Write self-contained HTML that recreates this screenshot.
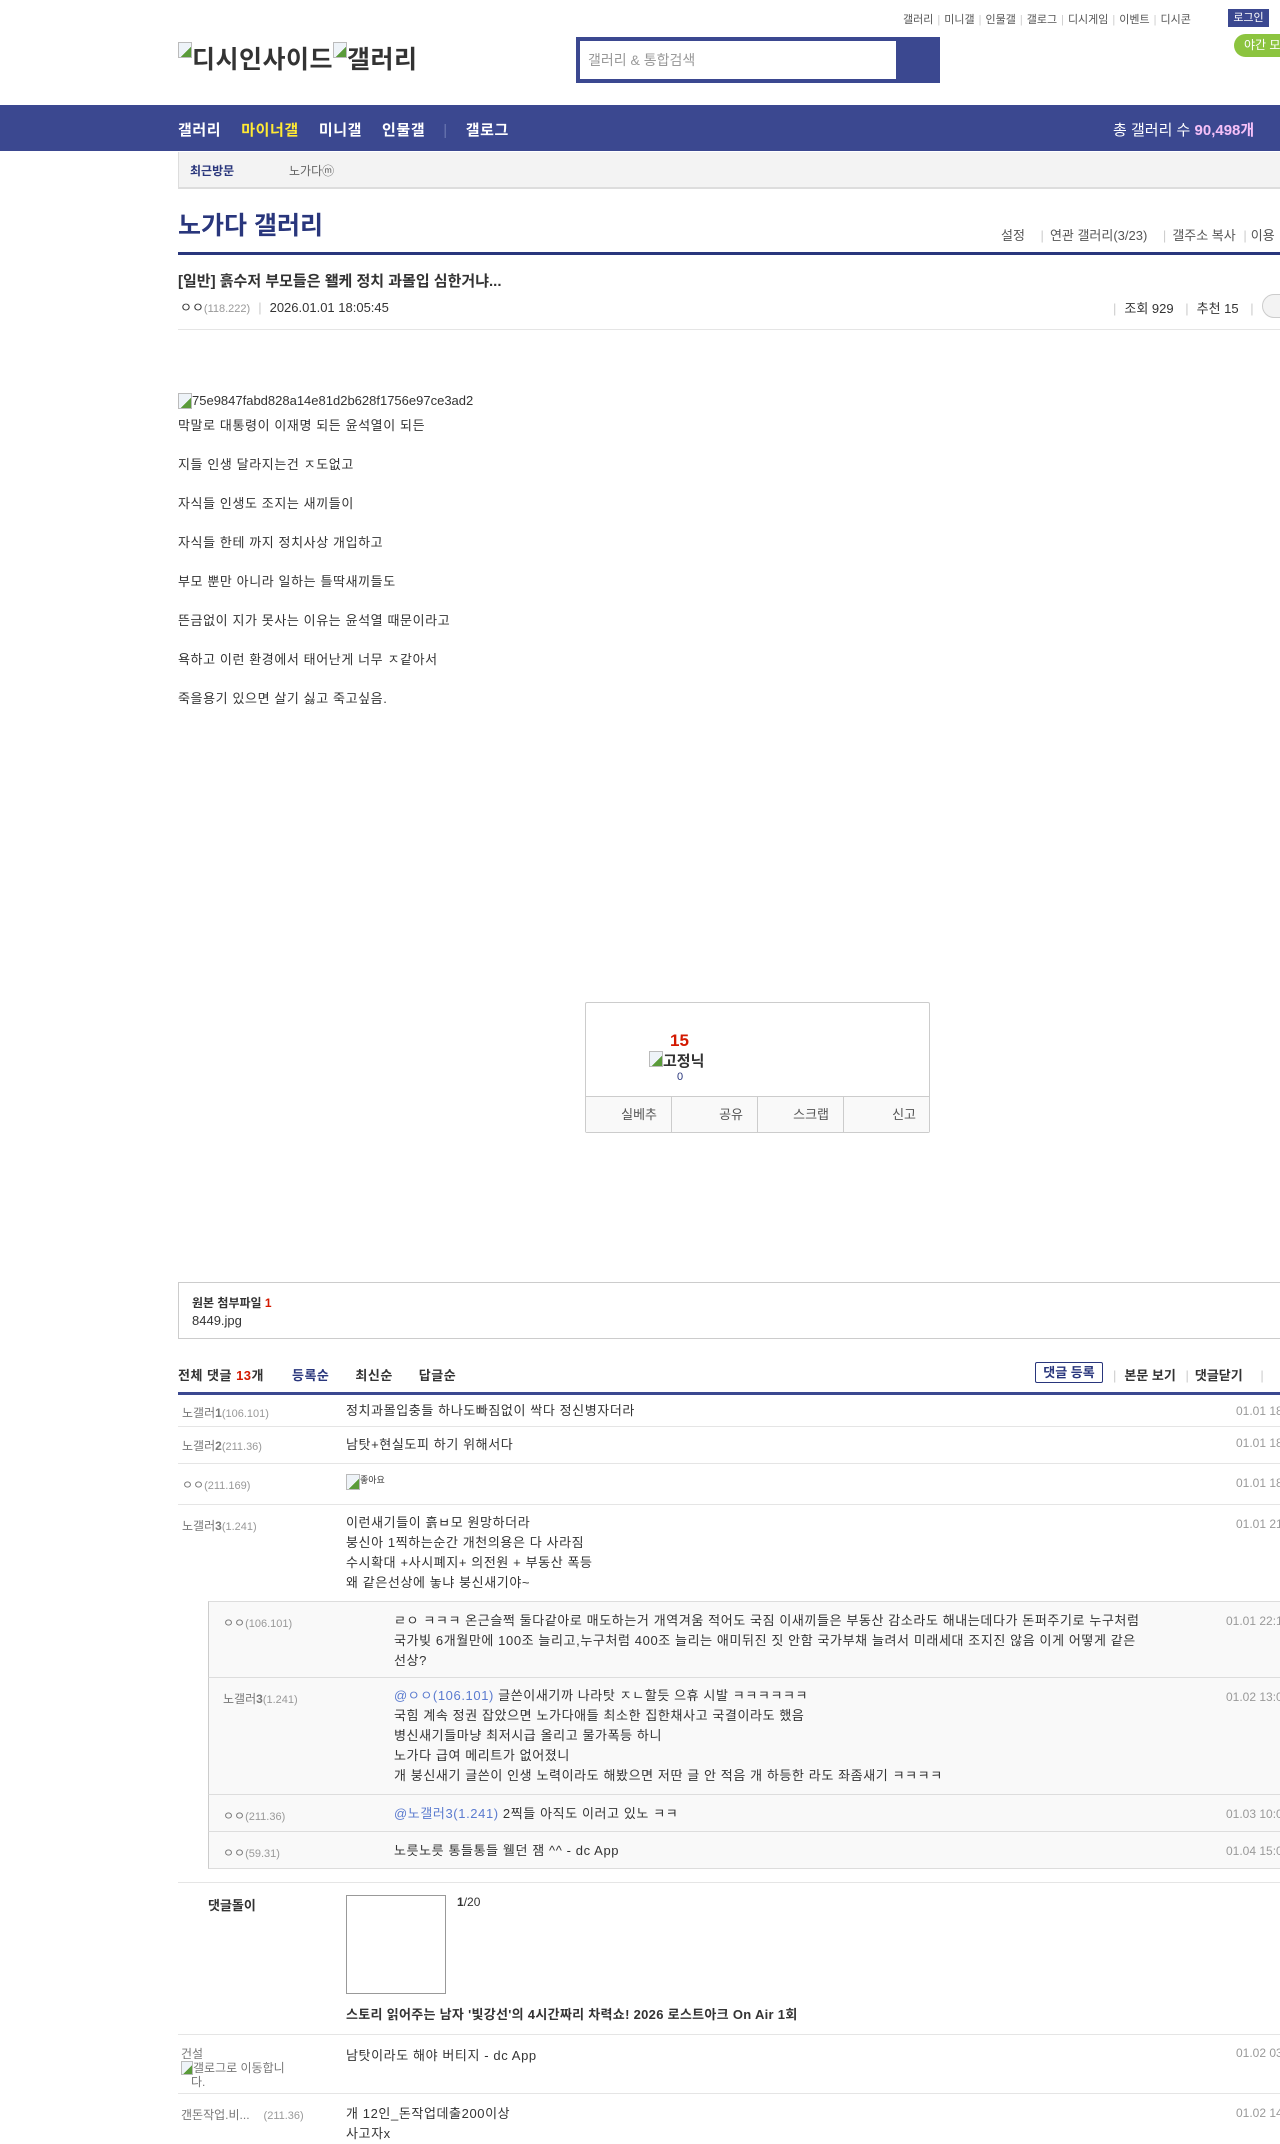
<!DOCTYPE html>
<html><head><meta charset="utf-8"><style>
*{margin:0;padding:0;box-sizing:border-box}
body{width:1280px;height:2142px;overflow:hidden;position:relative;background:#fff;font-family:"Liberation Sans","Noto Sans CJK KR",sans-serif;font-size:13px;color:#333}
.a{position:absolute;white-space:nowrap}
.tl{font-size:11px;color:#555}
.tl span{color:#ccc;margin:0 4px}
.g{color:#999;font-size:11px;letter-spacing:0}
.row{position:absolute;left:178px;width:1160px;border-bottom:1px solid #e5e5e5}
.nm{position:absolute;left:4px;color:#777;font-size:12px}
.ct{position:absolute;left:168px;font-size:13px;line-height:20px;color:#333;letter-spacing:0.6px}
.dt{position:absolute;left:1058px;color:#999;font-size:12px}
.rp{position:absolute;left:208px;width:1130px;background:#f9f9f9;border-left:1px solid #ccc;border-bottom:1px solid #ddd}
.rp .nm{left:14px}.rp .ct{left:185px;width:770px;white-space:normal}.rp .dt{left:1017px}
.at{color:#5b7bcf}
.bt{position:absolute;top:1096px;height:37px;width:86px;border-right:1px solid #ccc;text-align:right;padding-right:14px;line-height:37px;color:#555;font-size:13px}
.ic{display:inline-block;width:14px;height:16px;border:1px solid #bbb;background:linear-gradient(135deg,#eef3f8 60%,#5a9b3a 60%);vertical-align:top;margin-top:2px}
</style></head><body>
<div class="a tl" style="left:903px;top:11px">갤러리<span>|</span>미니갤<span>|</span>인물갤<span>|</span>갤로그<span>|</span>디시게임<span>|</span>이벤트<span>|</span>디시콘</div>
<div class="a" style="left:1228px;top:9px;width:41px;height:18px;background:#3b4890;color:#fff;font-size:11px;text-align:center;line-height:18px">로그인</div>
<div class="a" style="left:1234px;top:34px;width:60px;height:23px;background:#8cc43f;border-radius:12px;color:#fff;font-size:12px;line-height:23px;padding-left:10px">야간 모</div>
<div class="a" style="left:178px;top:40px;font-size:25px;font-weight:bold;color:#333;letter-spacing:0.5px"><span class="ic"></span>디시인사이드<span class="ic"></span>갤러리</div>
<div class="a" style="left:576px;top:37px;width:364px;height:46px;background:#3b4890"></div>
<div class="a" style="left:580px;top:41px;width:316px;height:38px;background:#fff;color:#999;font-size:14px;line-height:38px;padding-left:8px">갤러리 &amp; 통합검색</div>
<div class="a" style="left:0;top:105px;width:1280px;height:46px;background:#3b4890"></div>
<div class="a" style="left:178px;top:119px;font-size:15px;font-weight:bold;color:#fff;letter-spacing:0.6px">갤러리<span style="color:#ffea33;margin-left:20px">마이너갤</span><span style="margin-left:20px">미니갤</span><span style="margin-left:20px">인물갤</span><span style="color:#6a76b0;margin:0 18px;font-weight:normal">|</span>갤로그</div>
<div class="a" style="left:1113px;top:119px;font-size:15px;color:#fff">총 갤러리 수 <b style="color:#f5c0f8">90,498개</b></div>
<div class="a" style="left:178px;top:152px;width:1102px;height:37px;background:#f3f3f3;border-bottom:2px solid #ddd;border-left:1px solid #ddd"></div>
<div class="a" style="left:190px;top:162px;font-size:12px;font-weight:bold;color:#29367c">최근방문</div>
<div class="a" style="left:289px;top:162px;font-size:12px;color:#666">노가다ⓜ</div>
<div class="a" style="left:178px;top:206px;font-size:25px;font-weight:bold;color:#29367c">노가다 갤러리</div>
<div class="a" style="left:1001px;top:225px;font-size:13px;color:#555">설정 <span style="color:#ccc;margin:0 6px 0 12px">|</span>연관 갤러리(3/23) <span style="color:#ccc;margin:0 6px 0 12px">|</span>갤주소 복사 <span style="color:#ccc;margin:0 4px">|</span>이용</div>
<div class="a" style="left:178px;top:252px;width:1102px;height:3px;background:#29367c"></div>
<div class="a" style="left:178px;top:270px;font-size:15px;font-weight:bold;color:#333">[일반] 흙수저 부모들은 왤케 정치 과몰입 심한거냐...</div>
<div class="a" style="left:180px;top:297px;font-size:13px;color:#333">ㅇㅇ<span class="g">(118.222)</span><span style="color:#ccc;margin:0 8px">|</span>2026.01.01 18:05:45</div>
<div class="a" style="left:1113px;top:298px;font-size:13px;color:#333"><span style="color:#ccc;margin-right:8px">|</span>조회 929 <span style="color:#ccc;margin:0 8px">|</span>추천 15 <span style="color:#ccc;margin:0 8px">|</span></div>
<div class="a" style="left:1262px;top:294px;width:30px;height:24px;border:1px solid #ccc;border-radius:12px;background:#f3f3f3"></div>
<div class="a" style="left:178px;top:329px;width:1102px;height:1px;background:#e5e5e5"></div>
<div class="a" style="left:178px;top:393px;font-size:13px;color:#333"><span class="ic" style="margin-top:0"></span>75e9847fabd828a14e81d2b628f1756e97ce3ad2</div>
<div class="a" style="left:178px;top:406px;font-size:13px;line-height:39px;color:#333;letter-spacing:0.6px">막말로 대통령이 이재명 되든 윤석열이 되든<br>지들 인생 달라지는건 ㅈ도없고<br>자식들 인생도 조지는 새끼들이<br>자식들 한테 까지 정치사상 개입하고<br>부모 뿐만 아니라 일하는 틀딱새끼들도<br>뜬금없이 지가 못사는 이유는 윤석열 때문이라고<br>욕하고 이런 환경에서 태어난게 너무 ㅈ같아서<br>죽을용기 있으면 살기 싫고 죽고싶음.</div>
<div class="a" style="left:585px;top:1002px;width:345px;height:131px;border:1px solid #ccc;border-radius:2px"></div>
<div class="a" style="left:586px;top:1096px;width:343px;height:36px;background:#f9f9f9;border-top:1px solid #ccc"></div>
<div class="a" style="left:670px;top:1031px;font-size:17px;font-weight:bold;color:#d31900">15</div>
<div class="a" style="left:649px;top:1050px;font-size:15px;font-weight:bold;color:#333"><span class="ic" style="margin-top:1px"></span>고정닉</div>
<div class="a" style="left:677px;top:1071px;font-size:11px;color:#29367c">0</div>
<div class="bt" style="left:586px">실베추</div>
<div class="bt" style="left:672px">공유</div>
<div class="bt" style="left:758px">스크랩</div>
<div class="bt" style="left:844px;border:none">신고</div>
<div class="a" style="left:178px;top:1282px;width:1102px;height:57px;border:1px solid #ccc;border-right:none"></div>
<div class="a" style="left:192px;top:1294px;font-size:12px;font-weight:bold;color:#333">원본 첨부파일 <span style="color:#d31900">1</span></div>
<div class="a" style="left:192px;top:1313px;font-size:13px;color:#333">8449.jpg</div>
<div class="a" style="left:178px;top:1365px;font-size:13px;font-weight:bold;color:#333;letter-spacing:0.5px">전체 댓글 <span style="color:#d31900">13</span>개<span style="color:#29367c;margin-left:28px">등록순</span><span style="margin-left:26px">최신순</span><span style="margin-left:26px">답글순</span></div>
<div class="a" style="left:1035px;top:1362px;width:68px;height:21px;border:1px solid #29367c;border-radius:2px;color:#29367c;font-size:13px;font-weight:bold;text-align:center;line-height:19px">댓글 등록</div>
<div class="a" style="left:1113px;top:1365px;font-size:13px;font-weight:bold;color:#333"><span style="color:#ccc;font-weight:normal;margin-right:8px">|</span>본문 보기 <span style="color:#ccc;font-weight:normal;margin:0 6px">|</span>댓글닫기 <span style="color:#ccc;font-weight:normal;margin-left:14px">|</span></div>
<div class="a" style="left:178px;top:1392px;width:1102px;height:3px;background:#3b4890"></div>
<div class="row" style="top:1395px;height:32px"><span class="nm" style="top:9px">노갤러<b>1</b><span class="g">(106.101)</span></span><span class="ct" style="top:6px">정치과몰입충들 하나도빠짐없이 싹다 정신병자더라</span><span class="dt" style="top:9px">01.01 18:1</span></div>
<div class="row" style="top:1427px;height:37px"><span class="nm" style="top:10px">노갤러<b>2</b><span class="g">(211.36)</span></span><span class="ct" style="top:8px">남탓+현실도피 하기 위해서다</span><span class="dt" style="top:9px">01.01 18:</span></div>
<div class="row" style="top:1464px;height:41px"><span class="nm" style="top:12px">ㅇㅇ<span class="g">(211.169)</span></span><span class="ct" style="top:6px;font-size:9px;letter-spacing:0"><span class="ic" style="margin-top:4px"></span>좋아요</span><span class="dt" style="top:12px">01.01 18:</span></div>
<div class="row" style="top:1505px;height:96px;border:none"><span class="nm" style="top:12px">노갤러<b>3</b><span class="g">(1.241)</span></span><span class="ct" style="top:8px">이런새기들이 흙ㅂ모 원망하더라<br>붕신아 1찍하는순간 개천의용은 다 사라짐<br>수시확대 +사시폐지+ 의전원 + 부동산 폭등<br>왜 같은선상에 놓냐 붕신새기야~</span><span class="dt" style="top:12px">01.01 21:</span></div>
<div class="rp" style="top:1601px;height:77px;border-top:1px solid #ddd"><span class="nm" style="top:12px">ㅇㅇ<span class="g">(106.101)</span></span><span class="ct" style="top:9px;width:752px">ㄹㅇ ㅋㅋㅋ 온근슬쩍 둘다같아로 매도하는거 개역겨움 적어도 국짐 이새끼들은 부동산 감소라도 해내는데다가 돈퍼주기로 누구처럼 국가빚 6개월만에 100조 늘리고,누구처럼 400조 늘리는 애미뒤진 짓 안함 국가부채 늘려서 미래세대 조지진 않음 이게 어떻게 같은 선상?</span><span class="dt" style="top:12px">01.01 22:1</span></div>
<div class="rp" style="top:1678px;height:117px"><span class="nm" style="top:12px">노갤러<b>3</b><span class="g">(1.241)</span></span><span class="ct" style="top:8px"><span class="at">@ㅇㅇ(106.101)</span> 글쓴이새기까 나라탓 ㅈㄴ할듯 으휴 시발 ㅋㅋㅋㅋㅋㅋ<br>국힘 계속 정권 잡았으면 노가다애들 최소한 집한채사고 국결이라도 했음<br>병신새기들마냥 최저시급 올리고 물가폭등 하니<br>노가다 급여 메리트가 없어졌니<br>개 붕신새기 글쓴이 인생 노력이라도 해봤으면 저딴 글 안 적음 개 하등한 라도 좌좀새기 ㅋㅋㅋㅋ</span><span class="dt" style="top:12px">01.02 13:0</span></div>
<div class="rp" style="top:1795px;height:37px"><span class="nm" style="top:12px">ㅇㅇ<span class="g">(211.36)</span></span><span class="ct" style="top:9px"><span class="at">@노갤러3(1.241)</span> 2찍들 아직도 이러고 있노 ㅋㅋ</span><span class="dt" style="top:12px">01.03 10:0</span></div>
<div class="rp" style="top:1832px;height:37px"><span class="nm" style="top:12px">ㅇㅇ<span class="g">(59.31)</span></span><span class="ct" style="top:9px">노릇노릇 통들통들 웰던 잼 ^^ - dc App</span><span class="dt" style="top:12px">01.04 15:0</span></div>
<div class="row" style="top:1869px;height:14px"></div>
<div class="a" style="left:208px;top:1895px;font-size:13px;font-weight:bold;color:#333">댓글돌이</div>
<div class="a" style="left:346px;top:1895px;width:100px;height:99px;border:1px solid #999"></div>
<div class="a" style="left:457px;top:1895px;font-size:12px;color:#333"><b>1</b>/20</div>
<div class="a" style="left:346px;top:2004px;font-size:13px;font-weight:bold;color:#333;letter-spacing:0.3px">스토리 읽어주는 남자 '빛강선'의 4시간짜리 차력쇼! 2026 로스트아크 On Air 1회</div>
<div class="row" style="top:2034px;height:1px"></div>
<div class="a" style="left:181px;top:2047px;font-size:12px;color:#777;line-height:14px;white-space:normal;width:130px">건설<br><span class="ic" style="margin-top:0;width:12px;height:14px"></span>갤로그로 이동합니<br>&nbsp;&nbsp;&nbsp;다.</div>
<div class="a" style="left:346px;top:2045px;font-size:13px;letter-spacing:0.6px">남탓이라도 해야 버티지 - dc App</div>
<div class="a" style="left:1236px;top:2046px;font-size:12px;color:#999">01.02 03</div>
<div class="row" style="top:2093px;height:1px"></div>
<div class="a" style="left:181px;top:2106px;font-size:12px;color:#777">갠돈작업.비...<span class="g" style="margin-left:14px">(211.36)</span></div>
<div class="a" style="left:346px;top:2104px;font-size:13px;line-height:20px;letter-spacing:0.6px">개 12인_돈작업데출200이상<br>사고자x</div>
<div class="a" style="left:1236px;top:2106px;font-size:12px;color:#999">01.02 14</div>
</body></html>
